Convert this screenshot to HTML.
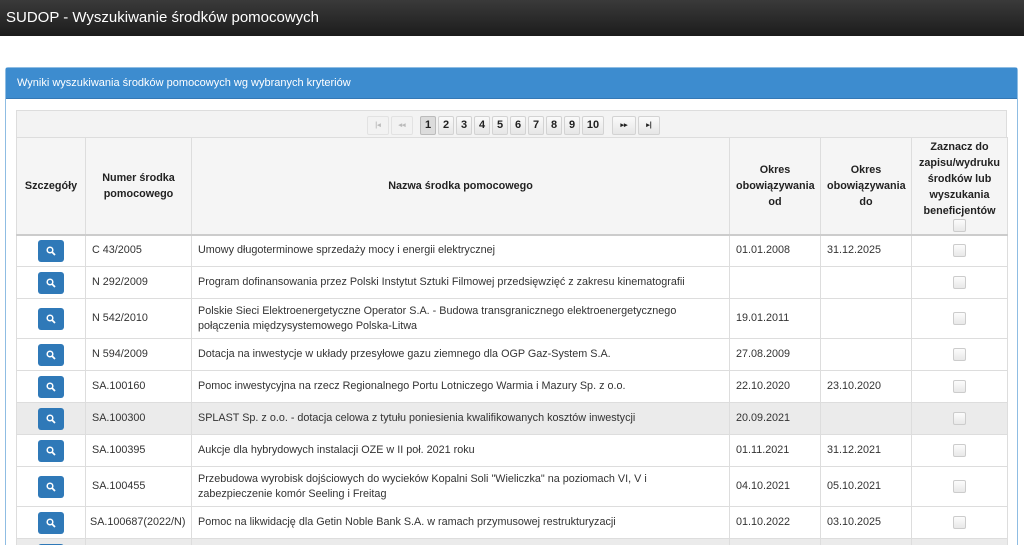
<!DOCTYPE html>
<html><head><meta charset="utf-8"><style>
*{box-sizing:border-box;margin:0;padding:0}
html,body{width:1024px;height:545px;overflow:hidden}
body{background:#fff;font-family:"Liberation Sans",sans-serif;color:#333;font-size:10.8px;position:relative}
.hdr{position:absolute;left:0;top:0;width:1024px;height:36px;background:linear-gradient(#3a3a3a,#1c1c1c);color:#fff;font-size:15px;line-height:36px;padding-left:6px}
.panel{position:absolute;left:5px;top:67px;width:1013px;height:500px;border:1px solid #8fbde3;border-radius:3px}
.ph{height:31px;background:#3d8ccf;color:#fff;font-size:11px;line-height:31px;padding-left:11px;border-bottom:1px solid #3478b5}
.pager{position:absolute;left:10px;top:42px;width:991px;height:28px;background:#f3f3f3;border:1px solid #ddd;border-bottom:none}
.pg{position:absolute;top:5px;height:19px;border:1px solid #d3d3d3;border-radius:2px;background:linear-gradient(#fafafa,#e6e6e6);font-size:11px;font-weight:bold;text-align:center;line-height:17px;color:#222}
.pg.d{color:#bbb;font-size:7px;background:#f2f2f2;border-color:#e2e2e2}
.pg.a{background:#dcdcdc;border-color:#bbb}
table{position:absolute;left:10px;top:69px;border-collapse:collapse;table-layout:fixed;width:991px}
td,th{border:1px solid #ddd;padding:0 6px;vertical-align:middle}
th{background:#f5f5f5;font-weight:bold;text-align:center;height:97px;line-height:16px;border-bottom:2px solid #ccc;color:#222}
td{height:32px;line-height:15px}
tr.g td{background:#ebebeb}
.b{display:block;margin:0 auto;width:26px;height:22px;background:#2f79b8;border-radius:3px;position:relative}
.b svg{position:absolute;left:8px;top:6px}
.cb{display:block;margin:0 auto;width:13px;height:13px;border:1px solid #ccc;border-radius:2px;background:linear-gradient(#fcfcfc,#e8e8e8)}
</style></head><body>
<div class="hdr">SUDOP - Wyszukiwanie środków pomocowych</div>
<div class="panel">
<div class="ph">Wyniki wyszukiwania środków pomocowych wg wybranych kryteriów</div>
<div class="pager">
<div class="pg d" style="left:350px;width:22px">|◂</div>
<div class="pg d" style="left:374px;width:22px">◂◂</div>
<div class="pg a" style="left:403px;width:16px">1</div>
<div class="pg" style="left:421px;width:16px">2</div>
<div class="pg" style="left:439px;width:16px">3</div>
<div class="pg" style="left:457px;width:16px">4</div>
<div class="pg" style="left:475px;width:16px">5</div>
<div class="pg" style="left:493px;width:16px">6</div>
<div class="pg" style="left:511px;width:16px">7</div>
<div class="pg" style="left:529px;width:16px">8</div>
<div class="pg" style="left:547px;width:16px">9</div>
<div class="pg" style="left:565px;width:22px">10</div>
<div class="pg" style="left:595px;width:24px;font-size:7px">▸▸</div>
<div class="pg" style="left:621px;width:22px;font-size:7px">▸|</div>
</div>
<table>
<colgroup><col style="width:69px"><col style="width:106px"><col style="width:538px"><col style="width:91px"><col style="width:91px"><col style="width:96px"></colgroup>
<tr><th>Szczegóły</th><th>Numer środka pomocowego</th><th>Nazwa środka pomocowego</th><th>Okres obowiązywania od</th><th>Okres obowiązywania do</th><th style="padding:0 2px">Zaznacz do zapisu/wydruku środków lub wyszukania beneficjentów<span class="cb"></span></th></tr>
<tr><td><span class="b"><svg width="10" height="10"><circle cx="4" cy="4" r="2.8" stroke="#fff" stroke-width="1.5" fill="none"/><path d="M6 6L9 9" stroke="#fff" stroke-width="1.8"/></svg></span></td><td>C 43/2005</td><td>Umowy długoterminowe sprzedaży mocy i energii elektrycznej</td><td>01.01.2008</td><td>31.12.2025</td><td><span class="cb"></span></td></tr>
<tr><td><span class="b"><svg width="10" height="10"><circle cx="4" cy="4" r="2.8" stroke="#fff" stroke-width="1.5" fill="none"/><path d="M6 6L9 9" stroke="#fff" stroke-width="1.8"/></svg></span></td><td>N 292/2009</td><td>Program dofinansowania przez Polski Instytut Sztuki Filmowej przedsięwzięć z zakresu kinematografii</td><td></td><td></td><td><span class="cb"></span></td></tr>
<tr><td style="height:40px"><span class="b"><svg width="10" height="10"><circle cx="4" cy="4" r="2.8" stroke="#fff" stroke-width="1.5" fill="none"/><path d="M6 6L9 9" stroke="#fff" stroke-width="1.8"/></svg></span></td><td>N 542/2010</td><td>Polskie Sieci Elektroenergetyczne Operator S.A. - Budowa transgranicznego elektroenergetycznego połączenia międzysystemowego Polska-Litwa</td><td>19.01.2011</td><td></td><td><span class="cb"></span></td></tr>
<tr><td><span class="b"><svg width="10" height="10"><circle cx="4" cy="4" r="2.8" stroke="#fff" stroke-width="1.5" fill="none"/><path d="M6 6L9 9" stroke="#fff" stroke-width="1.8"/></svg></span></td><td>N 594/2009</td><td>Dotacja na inwestycje w układy przesyłowe gazu ziemnego dla OGP Gaz-System S.A.</td><td>27.08.2009</td><td></td><td><span class="cb"></span></td></tr>
<tr><td><span class="b"><svg width="10" height="10"><circle cx="4" cy="4" r="2.8" stroke="#fff" stroke-width="1.5" fill="none"/><path d="M6 6L9 9" stroke="#fff" stroke-width="1.8"/></svg></span></td><td>SA.100160</td><td>Pomoc inwestycyjna na rzecz Regionalnego Portu Lotniczego Warmia i Mazury Sp. z o.o.</td><td>22.10.2020</td><td>23.10.2020</td><td><span class="cb"></span></td></tr>
<tr class="g"><td><span class="b"><svg width="10" height="10"><circle cx="4" cy="4" r="2.8" stroke="#fff" stroke-width="1.5" fill="none"/><path d="M6 6L9 9" stroke="#fff" stroke-width="1.8"/></svg></span></td><td>SA.100300</td><td>SPLAST Sp. z o.o. - dotacja celowa z tytułu poniesienia kwalifikowanych kosztów inwestycji</td><td>20.09.2021</td><td></td><td><span class="cb"></span></td></tr>
<tr><td><span class="b"><svg width="10" height="10"><circle cx="4" cy="4" r="2.8" stroke="#fff" stroke-width="1.5" fill="none"/><path d="M6 6L9 9" stroke="#fff" stroke-width="1.8"/></svg></span></td><td>SA.100395</td><td>Aukcje dla hybrydowych instalacji OZE w II poł. 2021 roku</td><td>01.11.2021</td><td>31.12.2021</td><td><span class="cb"></span></td></tr>
<tr><td style="height:40px"><span class="b"><svg width="10" height="10"><circle cx="4" cy="4" r="2.8" stroke="#fff" stroke-width="1.5" fill="none"/><path d="M6 6L9 9" stroke="#fff" stroke-width="1.8"/></svg></span></td><td>SA.100455</td><td>Przebudowa wyrobisk dojściowych do wycieków Kopalni Soli "Wieliczka" na poziomach VI, V i zabezpieczenie komór Seeling i Freitag</td><td>04.10.2021</td><td>05.10.2021</td><td><span class="cb"></span></td></tr>
<tr><td><span class="b"><svg width="10" height="10"><circle cx="4" cy="4" r="2.8" stroke="#fff" stroke-width="1.5" fill="none"/><path d="M6 6L9 9" stroke="#fff" stroke-width="1.8"/></svg></span></td><td style="padding:0 4px">SA.100687(2022/N)</td><td>Pomoc na likwidację dla Getin Noble Bank S.A. w ramach przymusowej restrukturyzacji</td><td>01.10.2022</td><td>03.10.2025</td><td><span class="cb"></span></td></tr>
<tr class="g"><td><span class="b"></span></td><td></td><td></td><td></td><td></td><td></td></tr>
</table>
</div>
</body></html>
